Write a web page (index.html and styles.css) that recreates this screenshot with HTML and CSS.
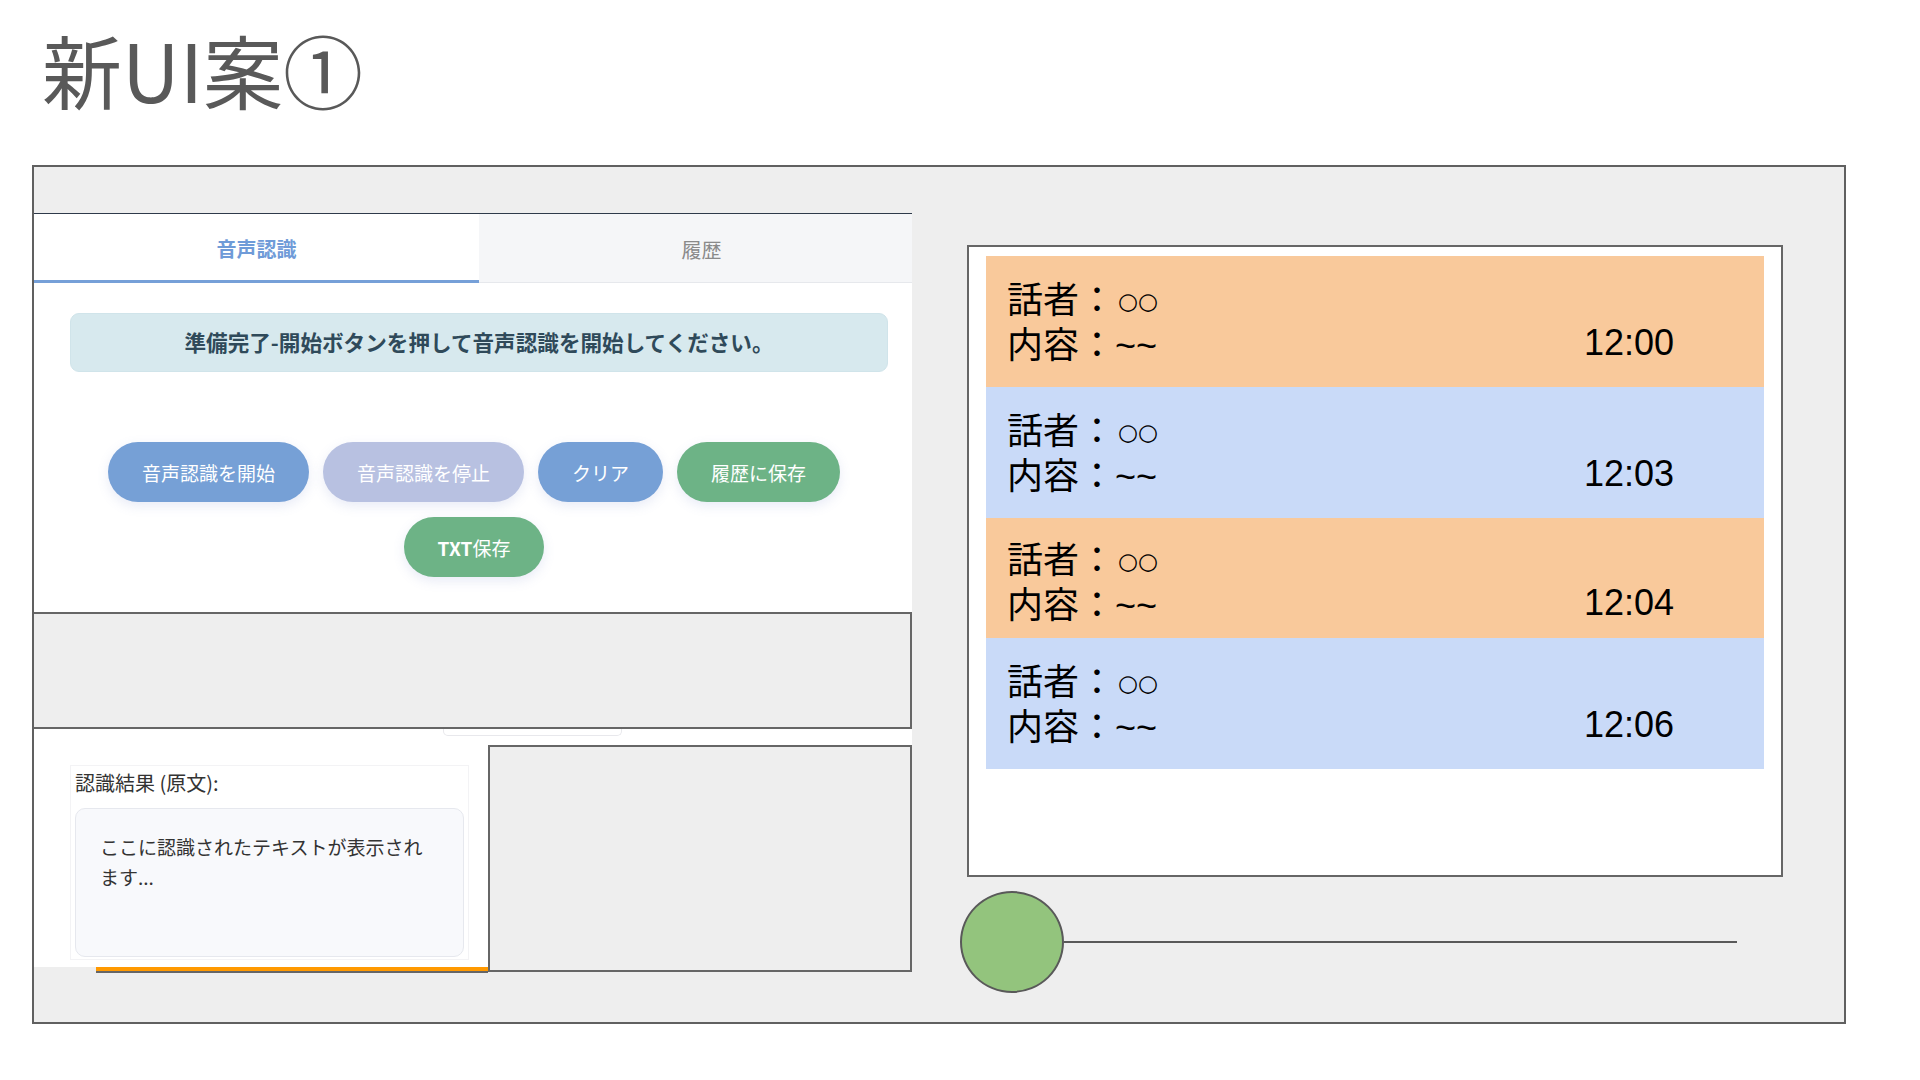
FILE: index.html
```html
<!DOCTYPE html>
<html lang="ja">
<head>
<meta charset="utf-8">
<title>新UI案①</title>
<link rel="stylesheet" href="styles.css">
</head>
<body>
<h1 class="slide-title">新UI案①</h1>
<div class="frame">
  <div class="left-col">
    <div class="app">
      <div class="tabs">
        <div class="tab tab-active">音声認識</div>
        <div class="tab tab-idle">履歴</div>
      </div>
      <div class="app-body">
        <div class="status">準備完了-開始ボタンを押して音声認識を開始してください。</div>
        <div class="buttons">
          <button class="btn btn-blue">音声認識を開始</button>
          <button class="btn btn-lavender">音声認識を停止</button>
          <button class="btn btn-blue">クリア</button>
          <button class="btn btn-green">履歴に保存</button>
          <button class="btn btn-green"><span class="btn-latin">TXT</span>保存</button>
        </div>
      </div>
    </div>
    <div class="placeholder placeholder-wide"></div>
    <div class="lower">
      <div class="lower-strip"><div class="peek"></div></div>
      <div class="lower-row">
        <div class="result-col">
          <div class="result-area">
            <div class="result-card">
              <div class="result-label">認識結果 (原文):</div>
              <div class="result-box">ここに認識されたテキストが表示されます...</div>
            </div>
          </div>
          <div class="orange-line"></div>
        </div>
        <div class="placeholder placeholder-side"></div>
      </div>
    </div>
  </div>
  <div class="right-col">
    <div class="log">
      <div class="entry entry-orange">
        <div class="entry-line">話者：<span class="oo">○○</span></div>
        <div class="entry-line entry-line-2"><span>内容：<span class="tilde">~~</span></span><span class="time">12:00</span></div>
      </div>
      <div class="entry entry-blue">
        <div class="entry-line">話者：<span class="oo">○○</span></div>
        <div class="entry-line entry-line-2"><span>内容：<span class="tilde">~~</span></span><span class="time">12:03</span></div>
      </div>
      <div class="entry entry-orange entry-short">
        <div class="entry-line">話者：<span class="oo">○○</span></div>
        <div class="entry-line entry-line-2"><span>内容：<span class="tilde">~~</span></span><span class="time">12:04</span></div>
      </div>
      <div class="entry entry-blue">
        <div class="entry-line">話者：<span class="oo">○○</span></div>
        <div class="entry-line entry-line-2"><span>内容：<span class="tilde">~~</span></span><span class="time">12:06</span></div>
      </div>
    </div>
    <div class="slider">
      <div class="knob"></div>
      <div class="track"></div>
    </div>
  </div>
</div>
</body>
</html>
```

FILE: styles.css
```css
* {
  box-sizing: border-box;
}

html, body {
  margin: 0;
  padding: 0;
  background: #ffffff;
}

body {
  width: 1920px;
  height: 1080px;
  overflow: hidden;
  font-family: "Noto Sans CJK JP", "Noto Sans", sans-serif;
}

.slide-title {
  margin: 0;
  padding: 28px 0 0 42px;
  height: 165px;
  font-size: 80px;
  line-height: 80px;
  font-weight: 400;
  color: #595959;
}

.frame {
  margin-left: 32px;
  width: 1814px;
  height: 859px;
  border: 2px solid #606060;
  background: #eeeeee;
  display: flex;
  align-items: flex-start;
}

/* ---------- left column ---------- */
.left-col {
  width: 878px;
  margin-top: 46px;
  display: flex;
  flex-direction: column;
  overflow: hidden;
}

.app {
  width: 890px;
  background: #ffffff;
  border-top: 1px solid #2e3a4a;
}

.tabs {
  display: flex;
  height: 69px;
}

.tab {
  flex: 1;
  display: flex;
  align-items: center;
  justify-content: center;
  font-size: 20px;
}

.tab-active {
  color: #6f9bd8;
  font-weight: 700;
  background: #ffffff;
  border-bottom: 3px solid #76a0d8;
  padding-top: 2px;
}

.tab-idle {
  color: #8a8a8a;
  background: #f5f6f8;
  border-bottom: 1px solid #e6e8ec;
  padding-top: 2px;
}

.app-body {
  height: 329px;
  padding-top: 30px;
}

.status {
  margin: 0 36px;
  height: 59px;
  border-radius: 9px;
  background: #d7e9ee;
  border: 1px solid #d0e4ea;
  color: #2f4a5a;
  font-size: 21.6px;
  font-weight: 700;
  display: flex;
  align-items: center;
  justify-content: center;
  padding-bottom: 2px;
}

.buttons {
  margin-top: 70px;
  padding: 0 65px 0 55px;
  display: flex;
  flex-wrap: wrap;
  justify-content: center;
  gap: 15px 14px;
}

.btn {
  height: 60px;
  padding: 0 34px;
  border: none;
  border-radius: 30px;
  color: #ffffff;
  font-family: "Noto Sans CJK JP", "Noto Sans", sans-serif;
  font-size: 19px;
  font-weight: 400;
  box-shadow: 0 4px 12px rgba(110, 130, 200, 0.16);
}

.btn-latin {
  font-weight: 700;
}

.btn-blue {
  background: #76a0d6;
}

.btn-lavender {
  background: #b8c1e1;
}

.btn-green {
  background: #6db386;
}

.placeholder {
  background: #eeeeee;
  border: 2px solid #666666;
}

.placeholder-wide {
  margin-left: -2px;
  width: 880px;
  height: 117px;
}

.lower {
  display: flex;
  flex-direction: column;
}

.lower-strip {
  height: 16px;
  background: #ffffff;
}

.peek {
  margin-left: 409px;
  width: 179px;
  height: 7px;
  border: 1px solid #e8e8ec;
  border-top: none;
  border-radius: 0 0 5px 5px;
  background: #ffffff;
}

.lower-row {
  display: flex;
  align-items: flex-start;
}

.result-col {
  width: 454px;
  display: flex;
  flex-direction: column;
}

.result-area {
  height: 222px;
  background: #ffffff;
  padding: 20px 0 0 36px;
}

.result-card {
  width: 399px;
  height: 195px;
  border: 1px solid #f3f3f5;
  padding: 4px;
  background: #ffffff;
}

.result-label {
  height: 26px;
  line-height: 26px;
  margin-bottom: 12px;
  font-size: 20px;
  color: #333333;
}

.result-box {
  height: 149px;
  border: 1px solid #e6e8ee;
  border-radius: 10px;
  background: #f8f9fc;
  padding: 23px 24px;
  font-size: 19px;
  line-height: 30px;
  color: #333333;
}

.orange-line {
  margin-left: 62px;
  height: 6px;
  background: #ff9900;
  border-bottom: 2px solid #666666;
}

.placeholder-side {
  width: 424px;
  height: 227px;
}

/* ---------- right column ---------- */
.right-col {
  margin-left: 55px;
  margin-top: 78px;
  display: flex;
  flex-direction: column;
}

.log {
  width: 816px;
  height: 632px;
  border: 2px solid #666666;
  background: #ffffff;
  padding: 9px 17px;
}

.entry {
  height: 131px;
  padding: 0 90px 4px 21px;
  display: flex;
  flex-direction: column;
  justify-content: center;
  font-size: 36px;
  line-height: 45px;
  color: #000000;
}

.entry-short {
  height: 120px;
  padding-bottom: 0;
  padding-top: 3px;
}

.entry-orange {
  background: #f9c99b;
}

.entry-blue {
  background: #c9daf8;
}

.entry-line {
  height: 45px;
  white-space: nowrap;
}

.entry-line-2 {
  display: flex;
  justify-content: space-between;
}

.oo {
  display: inline-block;
  margin-left: 3px;
  font-family: "DejaVu Sans", sans-serif;
  font-size: 23px;
  line-height: 1;
  vertical-align: 4px;
}

.tilde {
  font-family: "Liberation Sans", Arial, sans-serif;
  line-height: 1;
}

.time {
  font-family: "Liberation Sans", Arial, sans-serif;
  font-size: 36px;
  line-height: 45px;
}

.slider {
  margin-top: 14px;
  margin-left: -7px;
  display: flex;
  align-items: center;
}

.knob {
  width: 104px;
  height: 102px;
  border-radius: 50%;
  border: 2px solid #595959;
  background: #93c47d;
}

.track {
  width: 673px;
  height: 2px;
  background: #595959;
}
```
